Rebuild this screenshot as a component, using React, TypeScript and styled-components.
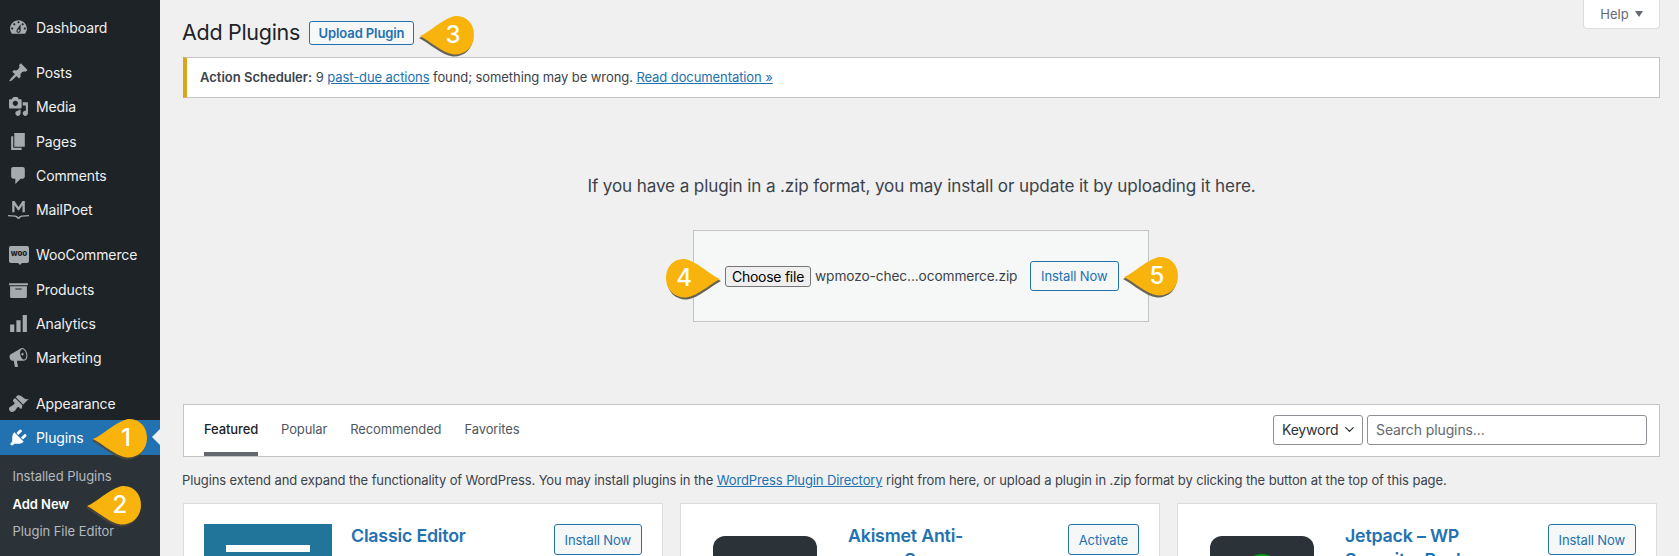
import { createGlobalStyle, styled } from "styled-components";
import { ChevronDown } from "lucide-react";
import type { ReactNode } from "react";

const GlobalStyle = createGlobalStyle`
  html, body {
    margin: 0;
    height: 556px;
    overflow: hidden;
    background: #f0f0f1;
    font-family: Inter, "Liberation Sans", sans-serif;
  }
  * { box-sizing: border-box; }
`;

const menuTop = [
  {
    label: "Dashboard",
    d: "M3.76 16h12.48c1.1-1.37 1.76-3.11 1.76-5 0-4.42-3.58-8-8-8s-8 3.58-8 8c0 1.89.66 3.63 1.76 5zM10 4c.55 0 1 .45 1 1s-.45 1-1 1-1-.45-1-1 .45-1 1-1zM6 6c.55 0 1 .45 1 1s-.45 1-1 1-1-.45-1-1 .45-1 1-1zm8 0c.55 0 1 .45 1 1s-.45 1-1 1-1-.45-1-1 .45-1 1-1zm-5.37 5.55L12 7v6c0 1.1-.9 2-2 2s-2-.9-2-2c0-.57.24-1.08.63-1.45zM4 10c.55 0 1 .45 1 1s-.45 1-1 1-1-.45-1-1 .45-1 1-1zm12 0c.55 0 1 .45 1 1s-.45 1-1 1-1-.45-1-1 .45-1 1-1zm-5 3c0-.55-.45-1-1-1s-1 .45-1 1 .45 1 1 1 1-.45 1-1z",
    gap: false,
  },
  {
    label: "Posts",
    d: "M10.44 3.02l1.82-1.82 6.36 6.35-1.83 1.82c-1.05-.68-2.48-.57-3.41.36l-.75.75c-.92.93-1.04 2.35-.35 3.41l-1.83 1.82-2.41-2.41-2.8 2.79c-.42.42-3.38 2.71-3.8 2.29s1.86-3.39 2.28-3.81l2.79-2.79L4.1 9.36l1.83-1.82c1.05.69 2.48.57 3.4-.36l.75-.75c.93-.92 1.05-2.35.36-3.41z",
    gap: true,
  },
  {
    label: "Media",
    d: "M13 11V4c0-.55-.45-1-1-1h-1.67L9 1H5L3.67 3H2c-.55 0-1 .45-1 1v7c0 .55.45 1 1 1h10c.55 0 1-.45 1-1zM7 4.5c1.38 0 2.5 1.12 2.5 2.5S8.38 9.5 7 9.5 4.5 8.38 4.5 7 5.62 4.5 7 4.5zM14 6h5v10.5c0 1.38-1.12 2.5-2.5 2.5S14 17.88 14 16.5s1.12-2.5 2.5-2.5c.17 0 .34.02.5.05V9h-3V6zm-4 8.05V13h2v3.5c0 1.38-1.12 2.5-2.5 2.5S7 17.88 7 16.5 8.12 14 9.5 14c.17 0 .34.02.5.05z",
    gap: false,
  },
  { label: "Pages", d: "M6 15V2h10v13H6zm-1 1h8v2H3V5h2v11z", gap: false },
  {
    label: "Comments",
    d: "M5 2h9c1.1 0 2 .9 2 2v7c0 1.1-.9 2-2 2h-2l-5 5v-5H5c-1.1 0-2-.9-2-2V4c0-1.1.9-2 2-2z",
    gap: false,
  },
  {
    label: "MailPoet",
    d: "M4 2h2.2L10 7.6 13.8 2H16v10.5h-2.2V6l-3.2 4.6H9.4L6.2 6v6.5H4zM0 15.2l7 .5c1 .1 1.8.5 3 1.6 1.2-1.1 2-1.5 3-1.6l7-.5v1.2l-6.6.5c-1 .1-1.9.9-2.4 1.8h-2c-.5-.9-1.4-1.7-2.4-1.8L0 16.4z",
    gap: false,
  },
  { label: "WooCommerce", woo: true, gap: true },
  {
    label: "Products",
    d: "M19 4v2H1V4h18zM2 7h16v10c0 .55-.45 1-1 1H3c-.55 0-1-.45-1-1V7zm11 3V9H7v1h6z",
    gap: false,
  },
  {
    label: "Analytics",
    d: "M2 11h4v7H2zM8 7h4v11H8zM14 2h4v16h-4z",
    gap: false,
  },
  {
    label: "Marketing",
    d: "M18.15 5.94c.46 1.62.38 3.22-.02 4.48-.42 1.28-1.26 2.18-2.3 2.48-.16.06-.26.06-.4.06-.06.02-.12.02-.18.02-.06.02-.14.02-.22.02H8.5l1 5.5c.02.14-.06.26-.14.34-.08.1-.24.16-.34.16H6.95c-.1 0-.26-.06-.34-.16-.08-.08-.16-.2-.14-.34l-1-5.5H4.25l-.02-.02c-.5.06-1.08-.18-1.54-.62s-.88-1.08-1.06-1.88c-.24-.8-.2-1.56-.02-2.2.18-.62.58-1.08 1.06-1.3l.02-.02 9-5.4c.1-.06.18-.1.24-.16.06-.04.14-.08.24-.12.16-.08.28-.12.5-.18 1.04-.3 2.24.1 3.22 1 .98.88 1.84 2.24 2.26 3.86zm-2.58 5.98c.4-.1.74-.34 1.04-.7.58-.7.86-1.76.86-3.04-.02-.64-.1-1.3-.28-1.98-.34-1.36-1.02-2.5-1.78-3.24-.38-.38-.8-.64-1.18-.78-.18-.06-.36-.08-.54-.08-.1 0-.2 0-.3.02-.38.1-.72.34-1 .7-.3.36-.52.82-.68 1.4-.14.5-.22 1.08-.2 1.7.02.66.1 1.32.28 1.98.36 1.36 1.02 2.52 1.78 3.26.4.38.8.64 1.2.78.18.06.36.08.54.08.1 0 .18 0 .28-.02zm-2.14-6.46c.6-.18 1.22.26 1.42 1 .2.72-.1 1.42-.72 1.58-.08.02-.14.02-.24.02-.58 0-1.18-.58-1.22-1.18-.02-.46.16-.86.54-1.02.08-.04.14-.08.2-.1z",
    gap: false,
  },
  {
    label: "Appearance",
    d: "M14.48 11.06L7.41 3.99l1.5-1.5c.5-.56 2.3-.47 3.51.32 1.21.8 1.43 1.28 2.91 2.1 1.18.64 2.45 1.26 4.45.85zm-.71.71L6.7 4.7 4.93 6.47c-.39.39-.39 1.02 0 1.41l1.06 1.06c.39.39.39 1.03 0 1.42-.6.6-1.43 1.11-2.21 1.69-.35.26-.7.53-1.01.84C1.43 13.23.99 14.08 1 15c0 .45.05.89.23 1.29.16.36.42.72.7.98.55.5 1.39.79 2.22.75.89-.05 1.76-.45 2.42-1.12.32-.32.59-.68.85-1.01.6-.78 1.11-1.61 1.71-2.21.39-.38 1.03-.39 1.42 0l1.06 1.06c.39.39 1.02.39 1.41 0z",
    gap: true,
  },
];

const plugIcon =
  "M13.11 4.36L9.87 7.6 8 5.73l3.24-3.24c.35-.34 1.05-.2 1.56.32.52.51.66 1.21.31 1.55zm-8 1.77l.91-1.12 9.01 9.01-1.19.84c-.71.71-2.63 1.16-3.82 1.16H6.14L4.9 17.26c-.59.59-1.54.59-2.12 0-.59-.58-.59-1.53 0-2.12l1.24-1.24v-3.88c0-1.13.4-3.19 1.09-3.89zm7.26 3.97l3.24-3.24c.34-.35 1.04-.21 1.55.31.52.51.66 1.21.31 1.55l-3.24 3.25z";

const teardrop =
  "M0 21C10 17 21 5 33 1.5 45-1 54 8 54 20 54 32 45 40 34 39.5 22 38 10 26 0 21Z";

const Callout = ({
  n,
  flip,
  at,
}: {
  n: number;
  flip?: boolean;
  at: string;
}) => (
  <CalloutWrap $at={at}>
    <CalloutShape $flip={flip} viewBox="0 0 54 42" aria-hidden>
      <path d={teardrop} fill="#4f4a3a" transform="translate(-1 2)" opacity="0.85" />
      <path d={teardrop} fill="#f8b30c" />
    </CalloutShape>
    <CalloutNumber $flip={flip}>{n}</CalloutNumber>
  </CalloutWrap>
);

const Sidebar = () => (
  <Side>
    <MenuList>
      {menuTop.map((m) => (
        <MenuRow key={m.label} $gap={m.gap}>
          {m.woo ? (
            <WooBadge>woo</WooBadge>
          ) : (
            <MenuIcon viewBox="0 0 20 20">
              <path d={m.d} />
            </MenuIcon>
          )}
          {m.label}
        </MenuRow>
      ))}
      <ActiveRow>
        <MenuIcon $white viewBox="0 0 20 20">
          <path d={plugIcon} />
        </MenuIcon>
        Plugins
        <Callout n={1} at="left: 93px; top: -2px;" />
      </ActiveRow>
    </MenuList>
    <SubMenu>
      <SubItem>Installed Plugins</SubItem>
      <SubItem $current>
        Add New
        <Callout n={2} at="left: 87px; top: -6px;" />
      </SubItem>
      <SubItem>Plugin File Editor</SubItem>
    </SubMenu>
  </Side>
);

const PluginCard = ({
  icon,
  title,
  action,
}: {
  icon: ReactNode;
  title: string;
  action: string;
}) => (
  <Card>
    <IconSlot>{icon}</IconSlot>
    <CardTitle>{title}</CardTitle>
    <CardButton>{action}</CardButton>
  </Card>
);

export default function App() {
  return (
    <>
      <GlobalStyle />
      <Page>
        <Sidebar />
        <Main>
          <TitleRow>
            <Title>Add Plugins</Title>
            <UploadButton>
              Upload Plugin
              <Callout n={3} at="left: 110px; top: -7px;" />
            </UploadButton>
            <HelpTab>
              Help <HelpCaret />
            </HelpTab>
          </TitleRow>

          <Notice>
            <b>Action Scheduler:</b> 9 <a href="#a">past-due actions</a> found;
            something may be wrong. <a href="#b">Read documentation »</a>
          </Notice>

          <UploadHint>
            If you have a plugin in a .zip format, you may install or update it
            by uploading it here.
          </UploadHint>

          <UploadBox>
            <Callout n={4} flip at="left: -28px; top: 27px;" />
            <FileButton>Choose file</FileButton>
            <FileName>wpmozo-chec...ocommerce.zip</FileName>
            <OutlineButton>Install Now</OutlineButton>
            <Callout n={5} at="left: 430px; top: 25px;" />
          </UploadBox>

          <FilterBar>
            <Tabs>
              <Tab $active>Featured</Tab>
              <Tab>Popular</Tab>
              <Tab>Recommended</Tab>
              <Tab>Favorites</Tab>
            </Tabs>
            <SearchForm>
              <KeywordSelect>
                Keyword
                <ChevronDown size={15} strokeWidth={2} />
              </KeywordSelect>
              <SearchInput placeholder="Search plugins..." />
            </SearchForm>
          </FilterBar>

          <Intro>
            Plugins extend and expand the functionality of WordPress. You may
            install plugins in the <a href="#c">WordPress Plugin Directory</a>{" "}
            right from here, or upload a plugin in .zip format by clicking the
            button at the top of this page.
          </Intro>

          <CardGrid>
            <PluginCard
              title="Classic Editor"
              action="Install Now"
              icon={
                <EditorIcon>
                  <EditorBar />
                </EditorIcon>
              }
            />
            <PluginCard
              title="Akismet Anti-spam: Spam Protection"
              action="Activate"
              icon={<DarkIcon />}
            />
            <PluginCard
              title="Jetpack – WP Security, Backup, Speed, & Growth"
              action="Install Now"
              icon={
                <DarkIcon>
                  <JetpackDot />
                </DarkIcon>
              }
            />
          </CardGrid>
        </Main>
      </Page>
    </>
  );
}

const Page = styled.div`
  display: flex;
  height: 556px;
  overflow: hidden;
`;

const Side = styled.aside`
  width: 160px;
  flex: none;
  height: 556px;
  background: #1d2327;
  padding-top: 10px;
`;

const MenuList = styled.div`
  display: flex;
  flex-direction: column;
`;

const MenuRow = styled.div<{ $gap?: boolean }>`
  height: 34.3px;
  margin-top: ${(p) => (p.$gap ? "11px" : "0")};
  display: flex;
  align-items: center;
  gap: 7px;
  padding-left: 8px;
  color: #f0f0f1;
  font-size: 14px;
  letter-spacing: -0.1px;
`;

const ActiveRow = styled(MenuRow)`
  position: relative;
  background: #2271b1;
  color: #fff;

  &::after {
    content: "";
    position: absolute;
    right: 0;
    top: 50%;
    margin-top: -8px;
    border: 8px solid transparent;
    border-right-color: #f0f0f1;
  }
`;

const MenuIcon = styled.svg<{ $white?: boolean }>`
  width: 21px;
  height: 21px;
  flex: none;
  fill: ${(p) => (p.$white ? "#fff" : "#a7aaad")};
`;

const WooBadge = styled.span`
  position: relative;
  width: 20px;
  height: 17px;
  flex: none;
  margin: 0 0 1px 1px;
  border-radius: 2px;
  background: #a7aaad;
  color: #1d2327;
  font-size: 8px;
  font-weight: 800;
  line-height: 15px;
  text-align: center;

  &::after {
    content: "";
    position: absolute;
    left: 9px;
    bottom: -2px;
    border: 2px solid transparent;
    border-top-color: #a7aaad;
    border-bottom: 0;
  }
`;

const SubMenu = styled.div`
  background: #2c3338;
  height: 101px;
  padding-top: 8.5px;
`;

const SubItem = styled.div<{ $current?: boolean }>`
  position: relative;
  height: 27.5px;
  line-height: 27.5px;
  padding-left: 12.5px;
  font-size: 13px;
  letter-spacing: -0.05px;
  font-weight: ${(p) => (p.$current ? 600 : 400)};
  color: ${(p) => (p.$current ? "#fff" : "#b4b9be")};
`;

const CalloutWrap = styled.span<{ $at: string }>`
  position: absolute;
  ${(p) => p.$at}
  width: 54px;
  height: 42px;
  display: block;
  z-index: 5;
`;

const CalloutShape = styled.svg<{ $flip?: boolean }>`
  display: block;
  width: 54px;
  height: 42px;
  overflow: visible;
  transform: ${(p) => (p.$flip ? "scaleX(-1)" : "none")};
`;

const CalloutNumber = styled.span<{ $flip?: boolean }>`
  position: absolute;
  top: 0;
  left: ${(p) => (p.$flip ? "0" : "15px")};
  width: 36px;
  height: 40px;
  color: #fff;
  font: 500 24px/40px Inter, "Liberation Sans", sans-serif;
  letter-spacing: 0;
  text-align: center;
`;

const Main = styled.main`
  flex: 1;
  min-width: 0;
  padding: 0 19px 0 23px;
  color: #3c434a;
`;

const TitleRow = styled.header`
  height: 57px;
  padding-top: 9px;
  display: flex;
  align-items: center;
  gap: 9px;
`;

const Title = styled.h1`
  margin: 0 0 0 -1px;
  font-size: 21.5px;
  line-height: 1.3;
  font-weight: 400;
  letter-spacing: -0.3px;
  color: #1d2327;
`;

const OutlineButton = styled.button`
  flex: none;
  height: 30px;
  padding: 0 10px;
  border: 1px solid #2271b1;
  border-radius: 3px;
  background: #f6f7f7;
  color: #2271b1;
  font: 400 13px Inter, "Liberation Sans", sans-serif;
  letter-spacing: -0.1px;
`;

const CardButton = styled(OutlineButton)`
  height: 31px;
`;

const UploadButton = styled(OutlineButton)`
  position: relative;
  width: 105px;
  height: 24px;
  padding: 0;
  font-weight: 600;
`;

const HelpTab = styled.div`
  align-self: flex-start;
  margin: -9px 0 0 auto;
  width: 77px;
  height: 29px;
  display: flex;
  align-items: center;
  justify-content: center;
  gap: 6px;
  background: #fff;
  border: 1px solid #dcdcde;
  border-top: 0;
  border-radius: 0 0 4px 4px;
  color: #646970;
  font-size: 13px;
`;

const HelpCaret = styled.i`
  border: 4px solid transparent;
  border-top: 6px solid #646970;
  border-bottom: 0;
`;

const Notice = styled.div`
  height: 41px;
  padding-left: 13px;
  background: #fff;
  border: 1px solid #c3c4c7;
  border-left: 4px solid #dba617;
  font-size: 13px;
  line-height: 38px;
  letter-spacing: -0.085px;

  b {
    font-weight: 600;
    letter-spacing: 0;
  }
  a {
    color: #2271b1;
  }
`;

const UploadHint = styled.p`
  margin: 74px 0 0;
  height: 27px;
  font-size: 17.1px;
  line-height: 27px;
  text-align: center;
  letter-spacing: -0.12px;
`;

const UploadBox = styled.div`
  position: relative;
  width: 456px;
  height: 92px;
  margin: 31px 0 0 510px;
  display: flex;
  align-items: center;
  padding-left: 31px;
  background: #f6f7f7;
  border: 1px solid #c3c4c7;
`;

const FileButton = styled.button`
  flex: none;
  width: 86px;
  height: 21px;
  padding: 0;
  background: #efefef;
  border: 1px solid #767676;
  border-radius: 3px;
  color: #000;
  font: 400 14px Inter, "Liberation Sans", sans-serif;
  letter-spacing: -0.25px;
`;

const FileName = styled.span`
  width: 219px;
  padding-left: 4px;
  font-size: 13.7px;
  letter-spacing: -0.1px;
  white-space: nowrap;
`;

const FilterBar = styled.section`
  height: 53px;
  margin-top: 82px;
  display: flex;
  align-items: center;
  justify-content: space-between;
  padding: 0 12px 0 20px;
  background: #fff;
  border: 1px solid #c3c4c7;
`;

const Tabs = styled.nav`
  align-self: stretch;
  display: flex;
  gap: 23px;
`;

const Tab = styled.span<{ $active?: boolean }>`
  display: flex;
  align-items: center;
  font-size: 13px;
  letter-spacing: -0.12px;
  color: ${(p) => (p.$active ? "#1d2327" : "#50575e")};
  font-weight: ${(p) => (p.$active ? 500 : 400)};
  border-bottom: 4px solid ${(p) => (p.$active ? "#646970" : "transparent")};
`;

const SearchForm = styled.div`
  display: flex;
  gap: 4px;
  margin-top: -2px;
`;

const KeywordSelect = styled.div`
  width: 90px;
  height: 30px;
  display: flex;
  align-items: center;
  justify-content: space-between;
  padding: 0 5px 0 8px;
  background: #fff;
  border: 1px solid #8c8f94;
  border-radius: 3px;
  color: #2c3338;
  font-size: 14px;
  letter-spacing: -0.2px;
`;

const SearchInput = styled.input`
  width: 280px;
  height: 30px;
  padding: 0 8px;
  border: 1px solid #8c8f94;
  border-radius: 3px;
  font: 400 14px Inter, "Liberation Sans", sans-serif;
  letter-spacing: -0.1px;

  &::placeholder {
    color: #646970;
    opacity: 1;
  }
`;

const Intro = styled.p`
  margin: 0 0 0 -1px;
  height: 46px;
  font-size: 13px;
  line-height: 46px;
  letter-spacing: -0.11px;
  white-space: nowrap;

  a {
    color: #2271b1;
  }
`;

const CardGrid = styled.div`
  display: grid;
  grid-template-columns: repeat(3, 480px);
  gap: 17px;
`;

const Card = styled.article`
  min-height: 200px;
  display: flex;
  align-items: flex-start;
  padding: 20px;
  background: #fff;
  border: 1px solid #dcdcde;
`;

const IconSlot = styled.div`
  width: 128px;
  height: 128px;
  flex: none;
  margin-right: 19px;
`;

const EditorIcon = styled.div`
  width: 128px;
  height: 128px;
  padding: 21px 22px 0;
  background: #21759b;
`;

const EditorBar = styled.div`
  height: 7px;
  background: #fff;
`;

const DarkIcon = styled.div`
  position: relative;
  width: 104px;
  height: 104px;
  margin: 12px;
  border-radius: 12px;
  background: #2c3338;
`;

const JetpackDot = styled.div`
  position: absolute;
  left: 30px;
  top: 18px;
  width: 44px;
  height: 44px;
  border-radius: 50%;
  background: #069e08;
`;

const CardTitle = styled.h3`
  width: 160px;
  margin: 0 auto 0 0;
  color: #2271b1;
  font-size: 17.8px;
  font-weight: 600;
  line-height: 24px;
  letter-spacing: -0.2px;
`;
